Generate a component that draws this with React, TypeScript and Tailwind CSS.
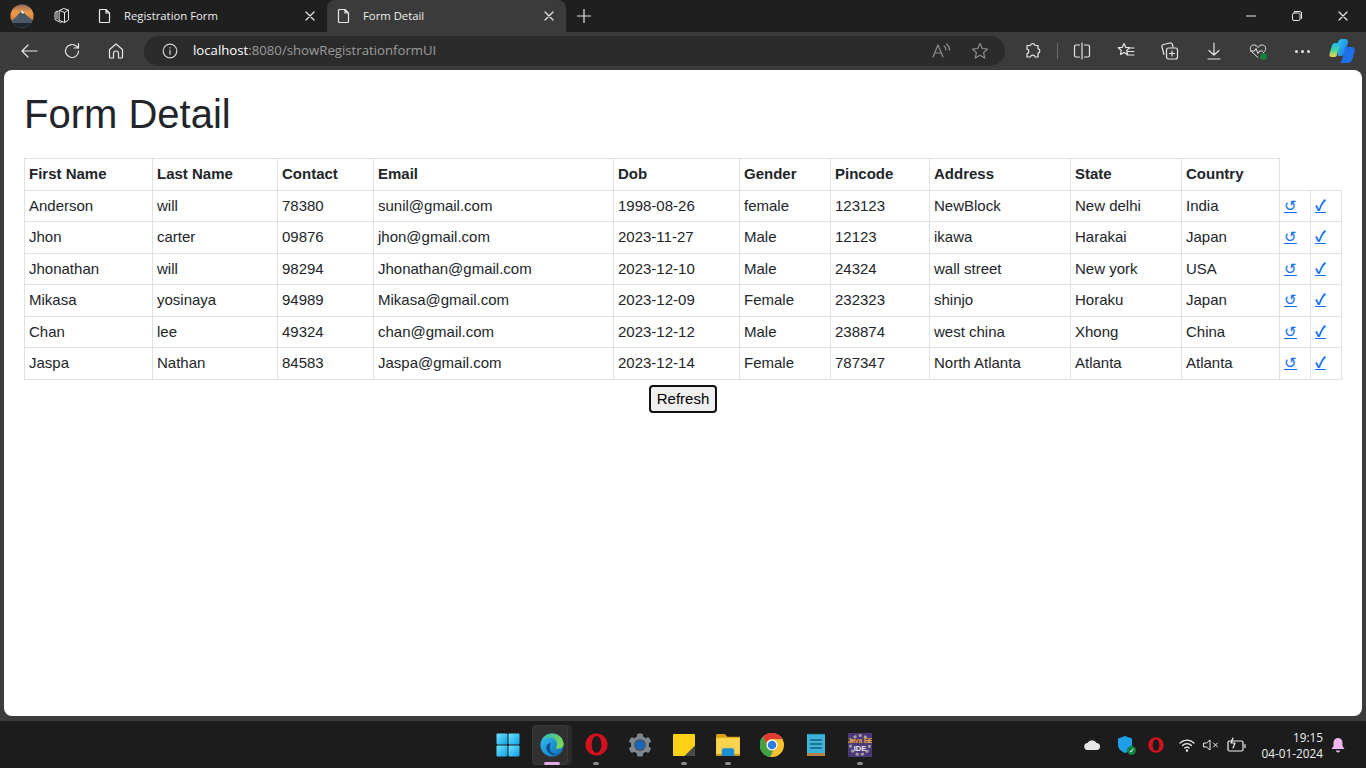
const rows = [
  ["Anderson", "will", "78380", "sunil@gmail.com", "1998-08-26", "female", "123123", "NewBlock", "New delhi", "India"],
  ["Jhon", "carter", "09876", "jhon@gmail.com", "2023-11-27", "Male", "12123", "ikawa", "Harakai", "Japan"],
  ["Jhonathan", "will", "98294", "Jhonathan@gmail.com", "2023-12-10", "Male", "24324", "wall street", "New york", "USA"],
  ["Mikasa", "yosinaya", "94989", "Mikasa@gmail.com", "2023-12-09", "Female", "232323", "shinjo", "Horaku", "Japan"],
  ["Chan", "lee", "49324", "chan@gmail.com", "2023-12-12", "Male", "238874", "west china", "Xhong", "China"],
  ["Jaspa", "Nathan", "84583", "Jaspa@gmail.com", "2023-12-14", "Female", "787347", "North Atlanta", "Atlanta", "Atlanta"],
];
const headers = ["First Name", "Last Name", "Contact", "Email", "Dob", "Gender", "Pincode", "Address", "State", "Country"];
const colWidths = ["w-[128px]", "w-[125px]", "w-[96px]", "w-[240px]", "w-[126px]", "w-[91px]", "w-[99px]", "w-[141px]", "w-[111px]", "w-[98px]", "w-[31px]", "w-[31px]"];

function Ic({ children, w = 20, h = 20, vb = "0 0 20 20", c = "#e8e8e8" }: { children: React.ReactNode; w?: number; h?: number; vb?: string; c?: string }) {
  return (
    <svg width={w} height={h} viewBox={vb} fill="none" stroke={c} strokeWidth="1.2" strokeLinecap="round" strokeLinejoin="round">
      {children}
    </svg>
  );
}

function DocIcon() {
  return (
    <Ic w={16} h={16} vb="0 0 16 16">
      <path d="M3.500 1.500h5.500l3.500 3.500v8.500a1 1 0 0 1-1 1h-8a1 1 0 0 1-1-1v-11a1 1 0 0 1 1-1zM9 1.500v3.500h3.500" />
    </Ic>
  );
}

function CloseIcon({ s = 10 }: { s?: number }) {
  return (
    <Ic w={s} h={s} vb="0 0 10 10">
      <path d="M1 1l8 8M9 1l-8 8" />
    </Ic>
  );
}

function Tab({ title, active }: { title: string; active?: boolean }) {
  return (
    <div className={`flex items-center h-[32px] w-[239px] rounded-t-lg pl-[9px] pr-[12px] ${active ? "bg-[#3b3b3b]" : ""}`}>
      <DocIcon />
      <span className="ml-[11px] flex-1 text-[11.300px] text-[#f0f0f0]">{title}</span>
      <CloseIcon />
    </div>
  );
}

function Avatar() {
  return (
    <svg width="24" height="24" viewBox="0 0 24 24">
      <defs>
        <clipPath id="av"><circle cx="12" cy="12" r="11.500" /></clipPath>
        <linearGradient id="avSky" x1="0" y1="0" x2="0" y2="1">
          <stop offset="0" stopColor="#8f6a5a" />
          <stop offset="0.35" stopColor="#ee9a4c" />
          <stop offset="0.7" stopColor="#d9803a" />
        </linearGradient>
      </defs>
      <g clipPath="url(#av)">
        <rect width="24" height="24" fill="url(#avSky)" />
        <path d="M0 18l6-5 6-7 4 5 8 6v7H0z" fill="#4a5a68" />
        <path d="M10.500 8l1.500-2 2.500 3-2 .8-.8-1z" fill="#efe8dc" />
        <rect y="19" width="24" height="5" fill="#1c262e" />
      </g>
    </svg>
  );
}

function Copilot() {
  return (
    <svg width="26" height="26" viewBox="0 0 26 26">
      <defs>
        <linearGradient id="cpA" x1="0" y1="0" x2="1" y2="1">
          <stop offset="0" stopColor="#2fc6f0" />
          <stop offset="1" stopColor="#1d6fe0" />
        </linearGradient>
        <linearGradient id="cpB" x1="0" y1="1" x2="0" y2="0">
          <stop offset="0" stopColor="#f5d24a" />
          <stop offset="0.5" stopColor="#3fd6a0" />
          <stop offset="1" stopColor="#25b8ee" />
        </linearGradient>
      </defs>
      <path d="M9 4c.6-1.500 2-3 4-3h3.500c2 0 3 2 2.500 3.500L16 15c-.7 2-2 3-4 3h-3z" fill="url(#cpA)" />
      <path d="M6 5h3.500c1 0 1.500 1 1.200 2l-2.700 10c-.4 1.500-1.500 2-3 2H2.500C1 19 0 17.500.5 16L3 7.500C3.500 6 4.500 5 6 5z" fill="url(#cpB)" />
      <path d="M17 9h5.500c2 0 3.800 1.500 3.300 3.500L23.500 21c-.6 2-2.500 4-4.500 4H9c2 0 3.500-1 4-3l2.500-10c.3-1.500.5-3 1.500-3z" fill="#1f6fe6" />
    </svg>
  );
}

function Edge() {
  return (
    <svg width="24" height="24" viewBox="0 0 26 26">
      <defs>
        <linearGradient id="edA" x1="0" y1="0" x2="1" y2="1">
          <stop offset="0" stopColor="#35c1f1" />
          <stop offset="1" stopColor="#0c6bb8" />
        </linearGradient>
        <linearGradient id="edB" x1="0" y1="0" x2="1" y2="0.6">
          <stop offset="0" stopColor="#2fb7b0" />
          <stop offset="1" stopColor="#7ed957" />
        </linearGradient>
      </defs>
      <circle cx="13" cy="13" r="12.500" fill="url(#edA)" />
      <path d="M3 6C6 1 11 .5 13 .5c7 0 12.500 5 12.500 11.500 0 3-2.500 5-5.500 5-2 0-3-.5-3-1 1-1 1.500-2 1.500-3.500C18.500 8 15 5 11 5 7.500 5 5 6 3 9z" fill="url(#edB)" />
      <path d="M10 11c-2.500 1-3.500 3.500-3 6 .7 4 5 7 10.500 7 1 0 2-.2 3-.7-3 .2-8-1-9.500-5-.8-2.500-.5-5.500 1-7.300z" fill="#0a4f8f" />
    </svg>
  );
}

function Opera({ s = 23, bg = "#1c1c1c" }: { s?: number; bg?: string }) {
  return (
    <svg width={s} height={s} viewBox="0 0 26 26">
      <circle cx="13" cy="13" r="12.500" fill="#d3121f" />
      <ellipse cx="13" cy="13" rx="5.500" ry="9.500" fill={bg} />
    </svg>
  );
}

function Gear() {
  return (
    <svg width="24" height="24" viewBox="0 0 24 24">
      <g fill="#7d8790">
        <circle cx="12" cy="12" r="9" />
        <rect x="9" y="0.500" width="6" height="23" rx="1.500" />
        <rect x="9" y="0.500" width="6" height="23" rx="1.500" transform="rotate(60 12 12)" />
        <rect x="9" y="0.500" width="6" height="23" rx="1.500" transform="rotate(120 12 12)" />
      </g>
      <circle cx="12" cy="12" r="6" fill="#4c565e" />
      <circle cx="12" cy="12" r="4.500" fill="#1565c0" />
    </svg>
  );
}

function Sticky() {
  return (
    <svg width="22" height="22" viewBox="0 0 23 23">
      <path d="M1 0h21a1 1 0 0 1 1 1v21a1 1 0 0 1-1 1H1a1 1 0 0 1-1-1V1a1 1 0 0 1 1-1z" fill="#fcd116" />
      <path d="M23 12v10a1 1 0 0 1-1 1H12z" fill="#4a4a4a" />
    </svg>
  );
}

function Folder() {
  return (
    <svg width="24" height="22" viewBox="0 0 25 23">
      <path d="M1 0h8l3 3h13v4H0V1z" fill="#d99f12" />
      <rect x="0" y="4" width="25" height="19" rx="1" fill="#fbd44e" />
      <rect x="0" y="21" width="25" height="2" fill="#c8961a" />
      <path d="M8 15h9a2 2 0 0 1 2 2v6H6v-6a2 2 0 0 1 2-2z" fill="#1d8fd6" />
    </svg>
  );
}

function Chrome() {
  return (
    <svg width="24" height="24" viewBox="0 0 48 48">
      <circle cx="24" cy="24" r="24" fill="#fbc02d" />
      <path d="M24 0a24 24 0 0 1 20.800 12H24a12 12 0 0 0-11.300 8L5.400 7.400A24 24 0 0 1 24 0z" fill="#e53935" />
      <path d="M5.400 7.400l10.400 18a9.500 9.500 0 0 0 12 7.500L20.500 47.700A24 24 0 0 1 5.400 7.400z" fill="#43a047" />
      <circle cx="24" cy="24" r="11" fill="#fff" />
      <circle cx="24" cy="24" r="8.500" fill="#2f7de1" />
    </svg>
  );
}

function Notepad() {
  return (
    <svg width="18" height="23" viewBox="0 0 18 23">
      <rect x="0" y="1" width="18" height="19" fill="#3cb4dc" />
      <rect x="0" y="20" width="18" height="3" fill="#b9824a" />
      <path d="M2 0v2M5 0v2M8 0v2M11 0v2M14 0v2M17 0v2" stroke="#1c5a72" strokeWidth="1.200" />
      <path d="M3 7h12M3 11h12M3 15h12" stroke="#14607e" strokeWidth="1.500" />
    </svg>
  );
}

function JavaIde() {
  return (
    <div className="relative w-[24px] h-[24px] bg-[#4a3a7c] flex items-center justify-center overflow-hidden">
      <svg className="absolute inset-0" width="24" height="24" viewBox="0 0 24 24">
        <circle cx="12" cy="12" r="9.500" fill="none" stroke="#a8a498" strokeWidth="2.500" strokeDasharray="3 2.400" />
      </svg>
      <div className="relative flex flex-col items-center leading-[8px] text-[6.500px] font-bold font-['Liberation_Sans',sans-serif]">
        <span className="whitespace-nowrap text-[#f09a2a]">Java EE</span>
        <span className="text-[#f0f0f0] text-[7.500px]">IDE</span>
      </div>
    </div>
  );
}

function Win11() {
  return (
    <svg width="24" height="24" viewBox="0 0 24 24">
      <defs>
        <linearGradient id="wn" x1="0" y1="0" x2="1" y2="1">
          <stop offset="0" stopColor="#6fe4ff" />
          <stop offset="1" stopColor="#0f9fe6" />
        </linearGradient>
      </defs>
      <rect x="0.500" y="0.500" width="11" height="11" rx="1" fill="url(#wn)" />
      <rect x="12.500" y="0.500" width="11" height="11" rx="1" fill="url(#wn)" />
      <rect x="0.500" y="12.500" width="11" height="11" rx="1" fill="url(#wn)" />
      <rect x="12.500" y="12.500" width="11" height="11" rx="1" fill="url(#wn)" />
    </svg>
  );
}

function TaskItem({ children, dot, active }: { children: React.ReactNode; dot?: boolean; active?: boolean }) {
  return (
    <div className="relative w-[44px] h-[40px] flex items-center justify-center">
      {active && <span className="absolute left-[2px] right-[2px] inset-y-0 rounded bg-[#2a2a2a]" />}
      {active && <span className="absolute left-[2px] right-[6px] inset-y-0 rounded bg-[#303030] border border-[#3a3a3a]" />}
      <span className="relative flex">{children}</span>
      {dot && <span className="absolute bottom-0 left-1/2 -ml-[3px] w-[6px] h-[3px] rounded-full bg-[#8c8c8c]" />}
      {active && <span className="absolute bottom-0 left-1/2 -ml-[8px] w-[16px] h-[3px] rounded-full bg-[#e3a8e6]" />}
    </div>
  );
}

export default function App() {
  return (
    <div className="w-[1366px] h-[768px] overflow-hidden flex flex-col bg-[#3b3b3b] font-['Open_Sans','Noto_Sans',sans-serif]">
      {/* tab strip */}
      <div className="h-[32px] bg-[#1f1f1f] flex items-end shrink-0">
        <div className="w-[44px] h-[32px] flex items-center justify-center"><Avatar /></div>
        <div className="w-[36px] h-[32px] flex items-center justify-center">
          <Ic w={18} h={18} vb="0 0 18 18">
            <path d="M6.500 3.500l4-2 5 1.500v10l-4 2.500-5-2zM11.500 15.500V5.500l4-2.500M6.500 3.500l5 2" strokeWidth="1" />
            <path d="M5 4L2 5.500v7l5.500 3 1.500-.8M4 4.800v7" strokeWidth="1" />
          </Ic>
        </div>
        <div className="w-[8px]" />
        <Tab title="Registration Form" />
        <Tab title="Form Detail" active />
        <div className="w-[36px] h-[32px] flex items-center justify-center">
          <Ic w={14} h={14} vb="0 0 14 14"><path d="M7 .5v13M.5 7h13" /></Ic>
        </div>
        <div className="flex-1" />
        <div className="h-[32px] flex items-center">
          <div className="w-[46px] flex justify-center"><Ic w={10} h={10} vb="0 0 10 10"><path d="M0 5h10" /></Ic></div>
          <div className="w-[46px] flex justify-center">
            <Ic w={10} h={10} vb="0 0 10 10"><rect x=".5" y="2" width="7.500" height="7.500" rx="1.500" strokeWidth="1" /><path d="M2.500.5H8A1.500 1.500 0 0 1 9.500 2v5.500" strokeWidth="1" /></Ic>
          </div>
          <div className="w-[46px] flex justify-center"><CloseIcon /></div>
        </div>
      </div>

      {/* toolbar */}
      <div className="h-[38px] flex items-center shrink-0">
        <div className="w-[50px] flex justify-end pr-[12px]">
          <Ic w={18} h={18} vb="0 0 18 18"><path d="M2 9h15M8 3L2 9l6 6" /></Ic>
        </div>
        <div className="w-[44px] flex justify-center">
          <Ic w={18} h={18} vb="0 0 18 18"><path d="M15.500 9a6.500 6.500 0 1 1-2-4.700L15.500 6M15.500 1.500V6H11" /></Ic>
        </div>
        <div className="w-[44px] flex justify-center">
          <Ic w={18} h={18} vb="0 0 18 18"><path d="M2.500 7.500L9 2l6.500 5.500V15a1 1 0 0 1-1 1H11.500v-4.500a2.500 2.500 0 0 0-5 0V16h-3a1 1 0 0 1-1-1z" /></Ic>
        </div>
        <div className="w-[6px]" />
        <div className="w-[861px] h-[30px] rounded-full bg-[#2b2b2b] flex items-center pl-[18px] pr-[16px]">
          <Ic w={16} h={16} vb="0 0 16 16" c="#d0d0d0"><circle cx="8" cy="8" r="6.800" /><path d="M8 7.200v4M8 4.600v.3" /></Ic>
          <div className="ml-[15px] flex-1 text-[13.200px] text-[#9c9c9c]">
            <span className="text-white">localhost</span>:8080/showRegistrationformUI
          </div>
          <Ic w={20} h={20} vb="0 0 20 20" c="#8f8f8f"><path d="M2 16L7 4l5 12M4 12h6M13 5c1.500 1 2 2.500 2 4M15.500 3c2 1.500 3 3.500 3 6" /></Ic>
          <div className="ml-[20px]">
            <Ic w={18} h={18} vb="0 0 18 18" c="#8f8f8f"><path d="M9 1.500l2.300 5 5.200.6-3.900 3.500 1.100 5.400-4.700-2.700-4.700 2.700 1.100-5.400-3.900-3.500 5.200-.6z" /></Ic>
          </div>
        </div>
        <div className="w-[17px]" />
        <div className="w-[22px] flex justify-center">
          <Ic w={18} h={18} vb="0 0 18 18"><path d="M6.500 3.500a2.300 2.300 0 0 1 4.500 0H14v3.200a2.300 2.300 0 0 1 0 4.500V15h-3a2.300 2.300 0 0 0-4.500 0H3v-3.300a2.300 2.300 0 0 0 0-4.500V3.500z" /></Ic>
        </div>
        <div className="w-[13px]" />
        <div className="w-[1px] h-[16px] bg-[#6a6a6a]" />
        <div className="w-[13px]" />
        <div className="w-[22px] flex justify-center">
          <Ic w={18} h={18} vb="0 0 18 18"><path d="M9 1v16M6.500 3H3a1.500 1.500 0 0 0-1.500 1.500v9A1.500 1.500 0 0 0 3 15h3.500M11.500 3H15a1.500 1.500 0 0 1 1.500 1.500v9A1.500 1.500 0 0 1 15 15h-3.500" /></Ic>
        </div>
        <div className="w-[22px]" />
        <div className="w-[22px] flex justify-center">
          <Ic w={18} h={18} vb="0 0 18 18"><path d="M7 1.500l1.700 3.800 4 .4-3 2.700.8 4-3.500-2-3.500 2 .8-4-3-2.700 4-.4zM12.500 6H17M11 9.500h6M10 13h7" /></Ic>
        </div>
        <div className="w-[22px]" />
        <div className="w-[22px] flex justify-center">
          <Ic w={18} h={18} vb="0 0 18 18"><path d="M3 12.500L1 5a2 2 0 0 1 1.500-2.500L9 1a2 2 0 0 1 2.400 1.500L12 5" /><rect x="5.500" y="6" width="11" height="11" rx="2" /><path d="M11 9v5M8.500 11.500h5" /></Ic>
        </div>
        <div className="w-[22px]" />
        <div className="w-[22px] flex justify-center">
          <Ic w={18} h={18} vb="0 0 18 18"><path d="M9 1v12M4 8.500L9 13l5-4.500M3 17h12" /></Ic>
        </div>
        <div className="w-[22px]" />
        <div className="relative w-[22px] flex justify-center">
          <Ic w={18} h={18} vb="0 0 18 18"><path d="M9 15.500L2.500 9.500C.5 7.500 1 3.500 4.500 3c2-.2 3.500 1 4.500 2.500C10 4 11.500 2.800 13.500 3c3.500.5 4 4.500 2 6.500L14 11M1.500 9h4l1.500-2.500 2 5 1.500-2.500h3" strokeWidth="1" /></Ic>
          <span className="absolute right-[2px] bottom-[0px] w-[7px] h-[7px] rounded-full bg-[#15803d]" />
        </div>
        <div className="w-[22px]" />
        <div className="w-[22px] flex justify-center gap-[3px]">
          <span className="w-[3px] h-[3px] rounded-full bg-[#e8e8e8]" />
          <span className="w-[3px] h-[3px] rounded-full bg-[#e8e8e8]" />
          <span className="w-[3px] h-[3px] rounded-full bg-[#e8e8e8]" />
        </div>
        <div className="w-[16px]" />
        <Copilot />
      </div>

      {/* page */}
      <div className="mx-[4px] h-[646px] shrink-0 bg-white rounded-lg pl-[20px] pr-[21px] pt-[20px] font-['Liberation_Sans',Arial,sans-serif] text-[#212529]">
        <h1 className="text-[40px] leading-[48px] font-normal">Form Detail</h1>
        <table className="mt-[20.400px] w-[1317px] table-fixed border-collapse text-[15px]">
          <colgroup>
            {colWidths.map((w, i) => (
              <col key={i} className={w} />
            ))}
          </colgroup>
          <thead>
            <tr className="h-[31.500px]">
              {headers.map((h) => (
                <th key={h} className="border border-[#dee2e6] px-[4px] text-left font-bold">{h}</th>
              ))}
            </tr>
          </thead>
          <tbody>
            {rows.map((r) => (
              <tr key={r[0]} className="h-[31.500px]">
                {r.map((v, i) => (
                  <td key={i} className="border border-[#dee2e6] px-[4px]">{v}</td>
                ))}
                <td className="border border-[#dee2e6] px-[4px]"><a href="#" className="text-[#0d6efd] underline font-['Noto_Sans_CJK_JP',sans-serif] text-[15px] leading-none">↺</a></td>
                <td className="border border-[#dee2e6] px-[4px]"><a href="#" className="text-[#0d6efd] underline font-bold font-['Noto_Sans_CJK_JP',sans-serif] text-[15px] leading-none">✓</a></td>
              </tr>
            ))}
          </tbody>
        </table>
        <div className="flex justify-center mt-[5.500px] pl-[1px]">
          <button className="h-[28px] w-[68px] border-2 border-[#111111] rounded bg-[#efefef] text-[15px] text-black">Refresh</button>
        </div>
      </div>

      {/* taskbar */}
      <div className="mt-[5px] flex-1 bg-[#1c1c1c] flex items-center">
        <div className="w-[486px]" />
        <TaskItem><Win11 /></TaskItem>
        <TaskItem active><Edge /></TaskItem>
        <TaskItem dot><Opera /></TaskItem>
        <TaskItem><Gear /></TaskItem>
        <TaskItem dot><Sticky /></TaskItem>
        <TaskItem dot><Folder /></TaskItem>
        <TaskItem><Chrome /></TaskItem>
        <TaskItem><Notepad /></TaskItem>
        <TaskItem dot><JavaIde /></TaskItem>
        <div className="flex-1 flex items-center justify-end pr-[21px]">
          <svg width="16" height="11" viewBox="0 0 16 11"><path d="M4 11a3.500 3.500 0 0 1-.5-7A5 5 0 0 1 12.500 4 3.500 3.500 0 0 1 12.500 11z" fill="#e8e8e8" /></svg>
          <div className="w-[17px]" />
          <div className="relative">
            <svg width="16" height="17" viewBox="0 0 16 17"><path d="M8 0l7 2.500V9c0 4-3.500 6.500-7 8-3.500-1.500-7-4-7-8V2.500z" fill="#1f9fe6" /></svg>
            <span className="absolute -right-[3px] -bottom-[2px] w-[9px] h-[9px] rounded-full bg-[#15803d] flex items-center justify-center text-[7px] leading-none text-white">✓</span>
          </div>
          <div className="w-[15px]" />
          <Opera s={16} />
          <div className="w-[15px]" />
          <Ic w={16} h={14} vb="0 0 16 14" c="#f0f0f0"><path d="M1 5a10 10 0 0 1 14 0M3.500 7.500a6.500 6.500 0 0 1 9 0M5.800 10a3 3 0 0 1 4.400 0" /><circle cx="8" cy="12.500" r=".6" fill="#f0f0f0" /></Ic>
          <div className="w-[8px]" />
          <Ic w={16} h={14} vb="0 0 16 14" c="#f0f0f0"><path d="M1 5h2.500L7 2v10L3.500 9H1zM10.500 5l4 4M14.500 5l-4 4" strokeWidth="1" /></Ic>
          <div className="w-[8px]" />
          <Ic w={19} h={16} vb="0 0 19 16" c="#f0f0f0"><rect x="1" y="4" width="15" height="10" rx="1.500" /><path d="M18 7.500v3M6 1L4 6h4l-2 5" /></Ic>
          <div className="ml-[15px] text-right text-[11.800px] leading-[16px] text-[#f0f0f0]">
            <div>19:15</div>
            <div>04-01-2024</div>
          </div>
          <div className="w-[8px]" />
          <svg width="14" height="16" viewBox="0 0 14 16"><path d="M7 1a4.500 4.500 0 0 1 4.500 4.500V9l2 3H.5l2-3V5.500A4.500 4.500 0 0 1 7 1zM5 13.500h4a2 2 0 0 1-4 0z" fill="#f0b4f0" /></svg>
        </div>
      </div>
    </div>
  );
}
